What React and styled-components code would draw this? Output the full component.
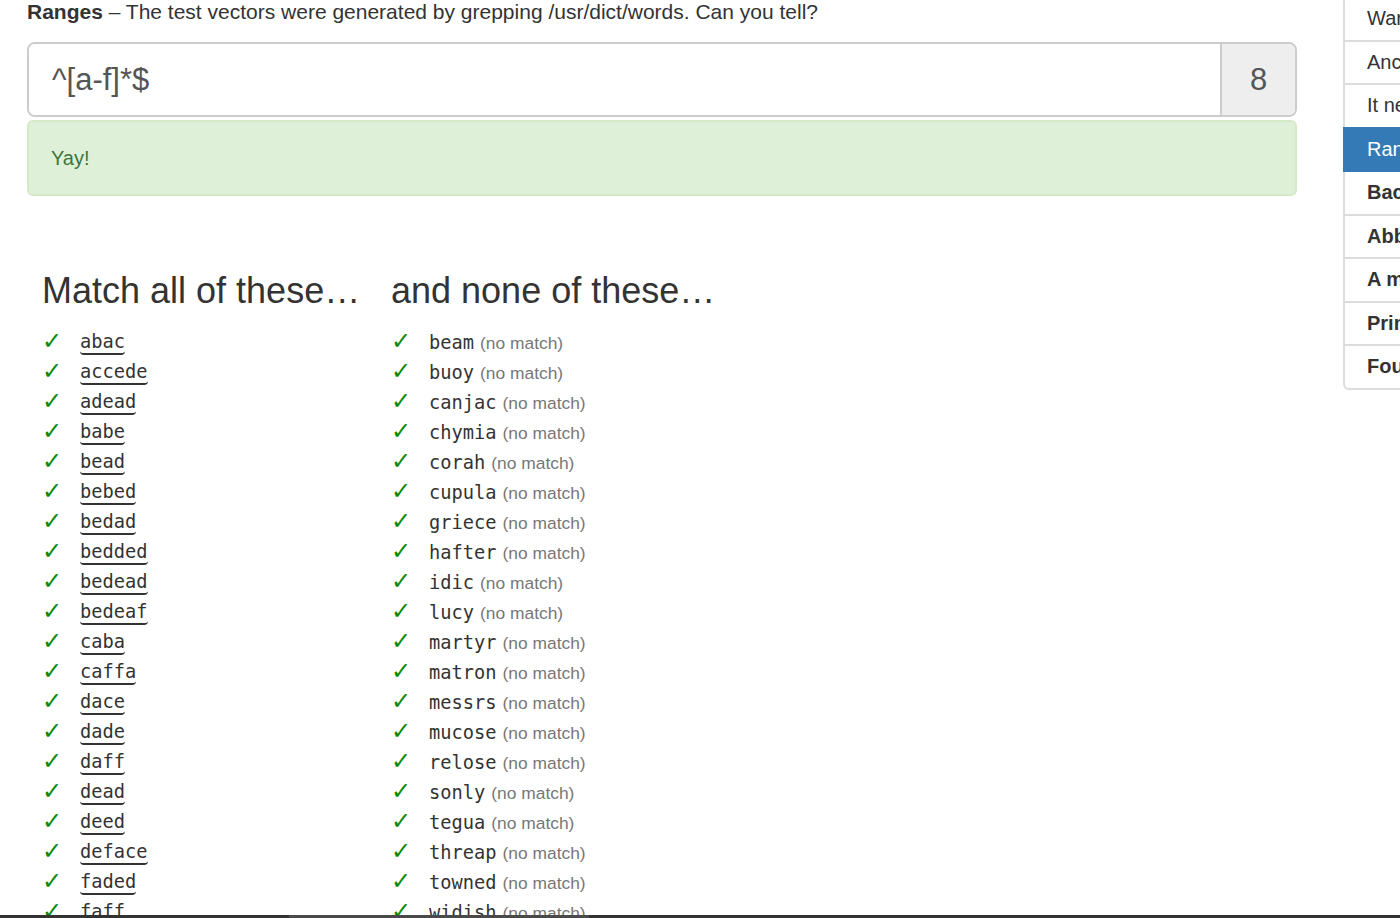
import React from "react";
import styled, { createGlobalStyle } from "styled-components";

const Global = createGlobalStyle`
  html, body { margin: 0; padding: 0; overflow: hidden; background: #fff; }
  body { font-family: "Liberation Sans", Arial, sans-serif; color: #333; }
`;

const Page = styled.div`
  display: flex;
  align-items: flex-start;
  width: 1700px;
`;

const Main = styled.div`
  width: 1270px;
  margin-left: 27px;
  flex-shrink: 0;
`;

const Lead = styled.p`
  margin: 0;
  font-size: 21px;
  line-height: 24px;
  color: #333;
`;

const InputGroup = styled.div`
  display: flex;
  margin-top: 18px;
  height: 75px;
  box-sizing: border-box;
  border: 2px solid #ccc;
  border-radius: 8px;
  overflow: hidden;
`;

const RegexInput = styled.div`
  flex: 1;
  display: flex;
  align-items: center;
  padding-left: 23px;
  font-size: 31px;
  color: #555;
  background: #fff;
`;

const Addon = styled.div`
  width: 73px;
  display: flex;
  align-items: center;
  justify-content: center;
  background: #eee;
  border-left: 2px solid #ccc;
  font-size: 31px;
  color: #555;
`;

const Alert = styled.div`
  margin-top: 3px;
  height: 76px;
  box-sizing: border-box;
  display: flex;
  align-items: center;
  padding-left: 22px;
  background: #dff0d8;
  border: 2px solid #d6e9c6;
  border-radius: 6px;
  color: #3c763d;
  font-size: 20px;
`;

const Columns = styled.div`
  display: grid;
  grid-template-columns: 349px 349px;
  margin-top: 75px;
`;

const Column = styled.div`
  padding: 0 15px;
`;

const Heading = styled.h2`
  margin: 0 0 17px;
  font-size: 36px;
  font-weight: 500;
  line-height: 40px;
  color: #333;
  white-space: nowrap;
`;

const List = styled.ul`
  list-style: none;
  margin: 0;
  padding: 0;
`;

const Row = styled.li`
  display: flex;
  align-items: center;
  height: 30px;
  white-space: nowrap;
`;

const Check = styled.span`
  width: 38px;
  flex-shrink: 0;
  font-family: "DejaVu Sans", sans-serif;
  font-size: 24px;
  font-weight: 700;
  color: #0a8a0a;
  line-height: 26px;
  padding-bottom: 4px;
`;

const Word = styled.span`
  font-family: "DejaVu Sans Mono", monospace;
  font-size: 18.7px;
  line-height: 22px;
  color: #333;
  ${(p) =>
    p.$underline &&
    `border-bottom: 2px solid #333; border-radius: 0 0 4px 4px; padding-bottom: 0;`}
`;

const NoMatch = styled.span`
  margin-left: 6px;
  font-size: 17.4px;
  color: #777;
`;

const Sidebar = styled.ul`
  list-style: none;
  margin: -4px 0 0 46px;
  padding: 0;
  width: 320px;
  flex-shrink: 0;
`;

const Item = styled.li`
  box-sizing: border-box;
  height: 45.5px;
  margin-bottom: -2px;
  padding: 0 22px;
  display: flex;
  align-items: center;
  font-size: 20px;
  font-weight: ${(p) => (p.$bold ? 700 : 400)};
  background: ${(p) => (p.$active ? "#337ab7" : "#fff")};
  color: ${(p) => (p.$active ? "#fff" : "#333")};
  border: 2px solid ${(p) => (p.$active ? "#337ab7" : "#ddd")};
  position: relative;
  z-index: ${(p) => (p.$active ? 2 : 1)};
  white-space: nowrap;
  &:first-child { border-top-left-radius: 6px; }
  &:last-child { border-bottom-left-radius: 6px; }
`;

const Scrollbar = styled.div`
  position: fixed;
  left: 0;
  right: 0;
  bottom: 0;
  height: 3px;
  background: #333;
  display: flex;
`;

const Thumb = styled.div`
  margin-left: 289px;
  width: 300px;
  background: #4a4a4a;
`;

const matches = [
  "abac", "accede", "adead", "babe", "bead", "bebed", "bedad", "bedded",
  "bedead", "bedeaf", "caba", "caffa", "dace", "dade", "daff", "dead",
  "deed", "deface", "faded", "faff", "feed",
];

const nonMatches = [
  "beam", "buoy", "canjac", "chymia", "corah", "cupula", "griece", "hafter",
  "idic", "lucy", "martyr", "matron", "messrs", "mucose", "relose", "sonly",
  "tegua", "threap", "towned", "widish", "yite",
];

const levels = [
  { name: "Warmup" },
  { name: "Anchors" },
  { name: "It never ends" },
  { name: "Ranges", active: true },
  { name: "Backrefs", bold: true },
  { name: "Abba", bold: true },
  { name: "A man, a plan", bold: true },
  { name: "Prime", bold: true },
  { name: "Four", bold: true },
];

export default function App() {
  return (
    <>
      <Global />
      <Page>
        <Main>
          <Lead>
            <strong>Ranges</strong> – The test vectors were generated by grepping
            /usr/dict/words. Can you tell?
          </Lead>
          <InputGroup>
            <RegexInput>^[a-f]*$</RegexInput>
            <Addon>8</Addon>
          </InputGroup>
          <Alert>Yay!</Alert>
          <Columns>
            <Column>
              <Heading>Match all of these…</Heading>
              <List>
                {matches.map((w) => (
                  <Row key={w}>
                    <Check>✓</Check>
                    <Word $underline>{w}</Word>
                  </Row>
                ))}
              </List>
            </Column>
            <Column>
              <Heading>and none of these…</Heading>
              <List>
                {nonMatches.map((w) => (
                  <Row key={w}>
                    <Check>✓</Check>
                    <Word>{w}</Word>
                    <NoMatch>(no match)</NoMatch>
                  </Row>
                ))}
              </List>
            </Column>
          </Columns>
        </Main>
        <Sidebar>
          {levels.map((l) => (
            <Item key={l.name} $active={l.active} $bold={l.bold}>
              {l.name}
            </Item>
          ))}
        </Sidebar>
      </Page>
      <Scrollbar>
        <Thumb />
      </Scrollbar>
    </>
  );
}
